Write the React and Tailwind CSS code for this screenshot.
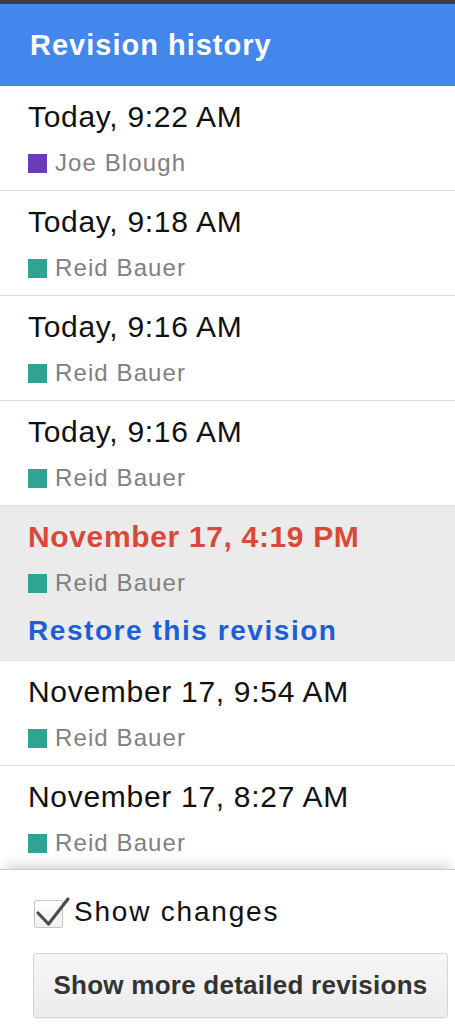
import { useState } from "react";

// lista de revizii afisata in panou
const revisions = [
  { id: 1, date: "Today, 9:22 AM", author: "Joe Blough", color: "bg-[#6a3db8]" },
  { id: 2, date: "Today, 9:18 AM", author: "Reid Bauer", color: "bg-[#2ea593]" },
  { id: 3, date: "Today, 9:16 AM", author: "Reid Bauer", color: "bg-[#2ea593]" },
  { id: 4, date: "Today, 9:16 AM", author: "Reid Bauer", color: "bg-[#2ea593]" },
  { id: 5, date: "November 17, 4:19 PM", author: "Reid Bauer", color: "bg-[#2ea593]" },
  { id: 6, date: "November 17, 9:54 AM", author: "Reid Bauer", color: "bg-[#2ea593]" },
  { id: 7, date: "November 17, 8:27 AM", author: "Reid Bauer", color: "bg-[#2ea593]" },
];

const RevisionRow = ({ revision, selected, onSelect }) => {
  return (
    <div
      onClick={() => onSelect(revision.id)}
      className={`pl-[28px] pr-4 pt-[14px] pb-[13px] border-b border-[#dedede] cursor-pointer ${
        selected ? "bg-[#ebebeb]" : "bg-white"
      }`}
    >
      {selected ? (
        <div className="text-[30px] leading-[34px] font-bold tracking-[0.65px] text-[#d8493a] whitespace-nowrap">
          {revision.date}
        </div>
      ) : (
        <div className="text-[30px] leading-[34px] tracking-[0.7px] text-[#111] whitespace-nowrap">
          {revision.date}
        </div>
      )}
      <div className="mt-[15px] flex items-center h-[28px]">
        <span className={`w-[19px] h-[19px] mr-[8px] ${revision.color}`} />
        <span className="text-[24px] leading-[28px] tracking-[1.1px] text-[#808080]">
          {revision.author}
        </span>
      </div>
      {selected && (
        <div className="mt-[18px] text-[28px] leading-[32px] font-bold tracking-[1.55px] text-[#1c5fd4]">
          Restore this revision
        </div>
      )}
    </div>
  );
};

export default function App() {
  const [selectedId, setSelectedId] = useState(5);
  const [showChanges, setShowChanges] = useState(true);

  return (
    <div
      className="w-[455px] h-[1024px] flex flex-col bg-white overflow-hidden"
      style={{ fontFamily: '"Liberation Sans", Arial, sans-serif' }}
    >
      <div className="h-[4px] bg-[#3d3d3d]" />

      {/* Header */}
      <div className="h-[82px] bg-[#4487ec] flex items-center pl-[30px]">
        <h1 className="text-[29px] font-bold tracking-[1px] text-white leading-none">
          Revision history
        </h1>
      </div>

      {/* Lista revizii */}
      <div className="flex-1 overflow-hidden">
        {revisions.map((rev) => (
          <RevisionRow
            key={rev.id}
            revision={rev}
            selected={rev.id === selectedId}
            onSelect={setSelectedId}
          />
        ))}
      </div>

      {/* Footer */}
      <div className="relative z-10 h-[155px] shrink-0 bg-white border-t border-[#c9c9c9] shadow-[0_-8px_12px_-4px_rgba(0,0,0,0.16)] pl-[33px] pr-[7px] pt-[26px]">
        <label className="flex items-end h-[32px] cursor-pointer select-none">
          <span
            onClick={() => setShowChanges(!showChanges)}
            className="relative ml-[1px] w-[29px] h-[28px] border border-[#c6c6c6] rounded-[2px] bg-gradient-to-b from-white to-[#f1f1f1]"
          >
            {showChanges && (
              <svg
                className="absolute left-0 top-[-5px] overflow-visible"
                width="36"
                height="34"
                viewBox="0 0 36 34"
              >
                <path
                  d="M3 17 L13.5 28 L33 3"
                  fill="none"
                  stroke="#4d4d4d"
                  strokeWidth="3.2"
                  strokeLinecap="round"
                  strokeLinejoin="round"
                />
              </svg>
            )}
          </span>
          <span className="ml-[11px] text-[28px] leading-[32px] tracking-[1.8px] text-[#111]">
            Show changes
          </span>
        </label>

        <button className="mt-[25px] w-[415px] h-[65px] rounded-[3px] border border-[#d4d4d4] bg-gradient-to-b from-[#f6f6f6] to-[#ececec] text-[26px] font-bold tracking-[0.25px] text-[#333] shadow-[0_1px_1px_rgba(0,0,0,0.05)]">
          Show more detailed revisions
        </button>
      </div>
    </div>
  );
}
